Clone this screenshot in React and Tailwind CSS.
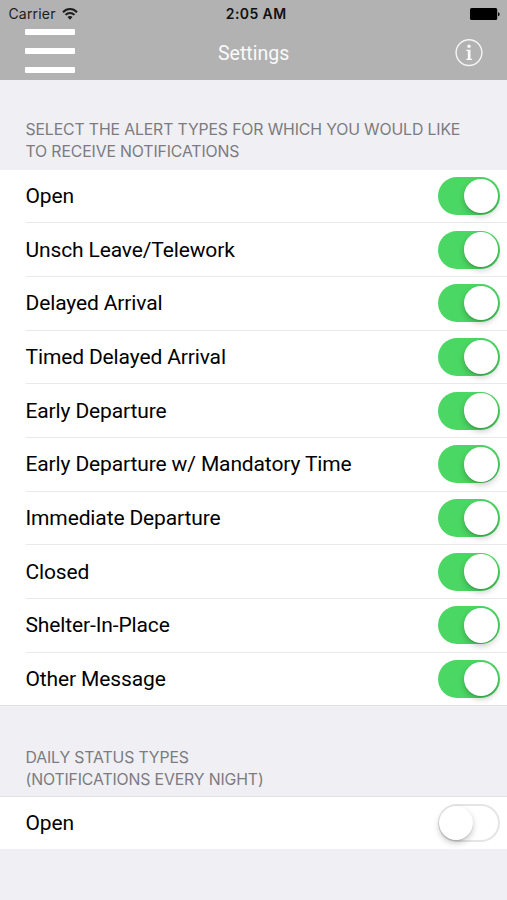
import { useState } from "react";

const alertTypes = [
  "Open",
  "Unsch Leave/Telework",
  "Delayed Arrival",
  "Timed Delayed Arrival",
  "Early Departure",
  "Early Departure w/ Mandatory Time",
  "Immediate Departure",
  "Closed",
  "Shelter-In-Place",
  "Other Message",
];

function WifiIcon() {
  return (
    <svg className="w-4 h-3" viewBox="0 0 16 12" fill="none">
      <path d="M1 4.2C5 0 11 0 15 4.2" stroke="#1c1c1c" strokeWidth="2" />
      <path d="M3.5 6.9C6.1 4.3 9.9 4.3 12.5 6.9" stroke="#1c1c1c" strokeWidth="2" />
      <path d="M8 11.8L5.5 9.1C7 7.7 9 7.7 10.5 9.1Z" fill="#1c1c1c" />
    </svg>
  );
}

function BatteryIcon() {
  return (
    <svg className="w-[30px] h-3" viewBox="0 0 30 12">
      <rect x="0" y="0" width="27.2" height="12" rx="1.6" fill="#000" />
      <path d="M28 4.2C30.2 4.6 30.2 7.8 28 8.2Z" fill="#111" />
    </svg>
  );
}

function InfoIcon() {
  return (
    <svg className="w-7 h-7" viewBox="0 0 28 28" fill="none">
      <circle cx="14" cy="13.6" r="12.9" stroke="#f5f5f5" strokeWidth="1.4" />
      <circle cx="14" cy="7.3" r="1.7" fill="#fafafa" />
      <path d="M11.3 10.8H15.5V19.8H17V20.9H11.3V19.8H12.8V11.9H11.3Z" fill="#fafafa" />
    </svg>
  );
}

function Toggle({ on, onClick }) {
  return (
    <button
      onClick={onClick}
      className={`w-[62px] h-[38px] rounded-full flex items-center shrink-0 ${
        on ? "bg-[#4bd763] justify-end pr-[1.5px]" : "bg-white inset-ring-2 inset-ring-[#e5e5e5] justify-start pl-[1px]"
      }`}
    >
      <span className="w-[34.5px] h-[34.5px] rounded-full bg-white shadow-[0_3px_6px_rgba(0,0,0,0.22),0_1px_1px_rgba(0,0,0,0.12)]"></span>
    </button>
  );
}

function Row({ label, on, onClick, last }) {
  return (
    <div className={`pl-[25.5px] ${last ? "h-[52.8px]" : "h-[53.7px]"}`}>
      <div className={`h-full flex items-center justify-between pr-[7.5px] ${last ? "" : "border-b border-[#e9e9eb]"}`}>
        <span className="font-[Roboto,sans-serif] text-[21px] leading-6 tracking-[-0.13px] text-black">{label}</span>
        <Toggle on={on} onClick={onClick} />
      </div>
    </div>
  );
}

export default function App() {
  const [alerts, setAlerts] = useState(alertTypes.map(() => true));
  const [daily, setDaily] = useState(false);

  return (
    <div className="w-[507px] h-[900px] bg-[#efeff4] overflow-hidden">
      <header className="h-[79.5px] bg-[#b2b2b2]">
        <div className="h-[27px] pl-[8.4px] pr-[7px] grid grid-cols-3 items-center font-[Inter,sans-serif]">
          <div className="flex items-center gap-1.5">
            <span className="text-[14px] leading-4 tracking-[0.2px] text-[#1c1c1c]">Carrier</span>
            <WifiIcon />
          </div>
          <span className="pl-1 text-center text-[14px] leading-4 tracking-[0.4px] font-semibold text-[#111]">2:05 AM</span>
          <div className="flex justify-end">
            <BatteryIcon />
          </div>
        </div>
        <div className="h-[51px] pl-[25.3px] pr-6 grid grid-cols-3 items-center">
          <button className="flex flex-col gap-[12.3px] w-[50px] -mt-[3px]">
            <span className="w-full h-[6.5px] bg-white rounded-[1px]"></span>
            <span className="w-full h-[6.5px] bg-white rounded-[1px]"></span>
            <span className="w-full h-[6.5px] bg-white rounded-[1px]"></span>
          </button>
          <h1 className="pt-[2.5px] pr-px text-center font-[Roboto,sans-serif] text-[19.5px] leading-6 text-[#fafafa]">Settings</h1>
          <div className="flex justify-end">
            <InfoIcon />
          </div>
        </div>
      </header>

      <h2 className="h-[90px] pl-[25.5px] pt-[39.4px] font-[Inter,sans-serif] text-[15.8px] leading-[22px] tracking-[-0.13px] text-[#7b7b80]">
        SELECT THE ALERT TYPES FOR WHICH YOU WOULD LIKE
        <br />
        TO RECEIVE NOTIFICATIONS
      </h2>
      <section className="bg-white">
        {alertTypes.map((label, i) => (
          <Row
            key={label}
            label={label}
            on={alerts[i]}
            onClick={() => setAlerts((a) => a.map((v, j) => (j === i ? !v : v)))}
            last={i === alertTypes.length - 1}
          />
        ))}
      </section>

      <h2 className="h-[91.2px] border-y border-[#e2e2e5] pl-[25.5px] pt-[40.2px] font-[Inter,sans-serif] text-[15.8px] leading-[22px] tracking-[-0.13px] text-[#7b7b80]">
        DAILY STATUS TYPES
        <br />
        (NOTIFICATIONS EVERY NIGHT)
      </h2>
      <section className="bg-white">
        <Row label="Open" on={daily} onClick={() => setDaily(!daily)} last />
      </section>
    </div>
  );
}
